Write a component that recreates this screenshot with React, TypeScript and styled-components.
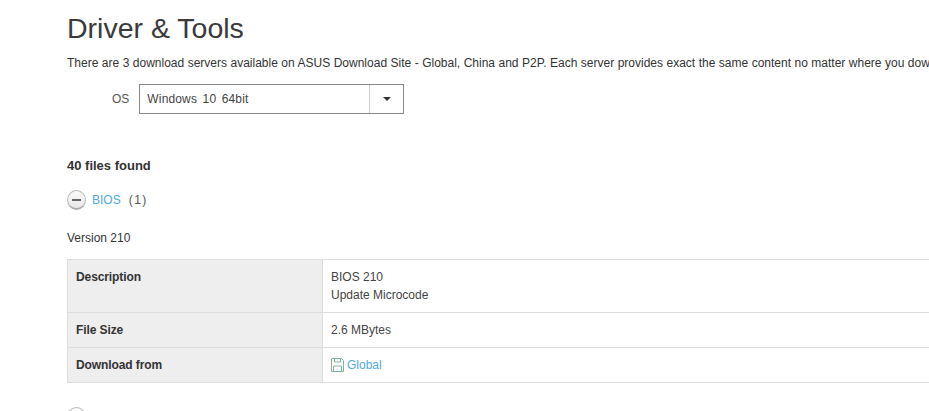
import styled, { createGlobalStyle } from "styled-components";

const GlobalStyle = createGlobalStyle`
  html,
  body {
    width: 929px;
    height: 411px;
    margin: 0;
    overflow: hidden;
    background: #fff;
  }
`;

const Page = styled.div`
  box-sizing: border-box;
  width: 1200px;
  height: 411px;
  padding: 10px 0 0 67px;
  overflow: hidden;
  font-family: "Liberation Sans", Arial, sans-serif;
  font-size: 12px;
  color: #333;
`;

const Title = styled.h1`
  margin: 0;
  font-size: 28.5px;
  font-weight: 400;
  line-height: 36px;
  color: #3a3a3a;
`;

const Intro = styled.p`
  margin: 9px 0 0;
  line-height: 16px;
  white-space: nowrap;
  word-spacing: 0.15px;
`;

const OsRow = styled.div`
  display: flex;
  gap: 10px;
  align-items: center;
  margin: 13px 0 0 45px;
`;

const OsLabel = styled.span`
  color: #555;
`;

const Select = styled.div`
  box-sizing: border-box;
  display: flex;
  width: 265px;
  height: 30px;
  border: 1px solid #888;
`;

const SelectValue = styled.div`
  display: flex;
  flex: 1;
  align-items: center;
  padding-left: 7px;
  color: #444;
  letter-spacing: 0.15px;
  word-spacing: 2px;
`;

const SelectArrow = styled.div`
  display: flex;
  align-items: center;
  justify-content: center;
  width: 33px;
  border-left: 1px solid #ccc;

  &::after {
    content: "";
    border-top: 4px solid #333;
    border-right: 4px solid transparent;
    border-left: 4px solid transparent;
  }
`;

const FilesFound = styled.h2`
  margin: 44px 0 0;
  font-size: 13px;
  font-weight: 700;
  line-height: 16px;
  color: #333;
`;

const Category = styled.div`
  display: flex;
  gap: 6px;
  align-items: center;
  height: 20px;
  margin-top: 16px;
`;

const ToggleButton = styled.span`
  box-sizing: border-box;
  display: flex;
  align-items: center;
  justify-content: center;
  width: 19px;
  height: 20px;
  background: linear-gradient(#fafafa, #e8e8e8);
  border: 1px solid #bbb;
  border-bottom: 2px solid #aaa;
  border-radius: 50%;

  &::after {
    content: "";
    width: 9px;
    height: 2px;
    background: #666;
  }
`;

const LinkText = styled.a`
  color: #4fa9dd;
  text-decoration: none;
`;

const Count = styled.span`
  margin-left: 2px;
  color: #555;
  letter-spacing: 1.5px;
`;

const Version = styled.div`
  margin-top: 20px;
  line-height: 16px;
`;

const SpecTable = styled.div`
  display: grid;
  grid-template-columns: 255px 1fr;
  margin-top: 13px;
  border-top: 1px solid #ddd;
  border-bottom: 1px solid #ddd;
  border-left: 1px solid #ddd;
`;

const HeadCell = styled.div<{ $last?: boolean }>`
  box-sizing: border-box;
  padding: 8px;
  font-weight: 700;
  line-height: 18px;
  color: #333;
  letter-spacing: -0.1px;
  background: #eee;
  border-right: 1px solid #ddd;
  border-bottom: ${(p) => (p.$last ? "0" : "1px solid #ddd")};
`;

const ValueCell = styled.div<{ $last?: boolean }>`
  box-sizing: border-box;
  display: flex;
  flex-direction: column;
  padding: 8px;
  line-height: 18px;
  color: #444;
  border-bottom: ${(p) => (p.$last ? "0" : "1px solid #ddd")};
`;

const DownloadLink = styled(LinkText)`
  display: flex;
  gap: 3px;
  align-items: center;
`;

const NextToggle = styled.span`
  display: block;
  box-sizing: border-box;
  width: 19px;
  height: 20px;
  margin-top: 24px;
  border: 1px solid #bbb;
  border-radius: 50%;
`;

const FloppyIcon = () => (
  <svg width="13" height="14" viewBox="0 0 13 14" fill="none" stroke="#7fb59a" strokeWidth="1">
    <path d="M.5.5h10l2 2v11H.5z" />
    <path d="M3.5.5v3.5h6V.5M2.5 13.5V8h8v5.5" />
  </svg>
);

export default function App() {
  return (
    <Page>
      <GlobalStyle />
      <Title>Driver &amp; Tools</Title>
      <Intro>
        There are 3 download servers available on ASUS Download Site - Global, China and P2P. Each
        server provides exact the same content no matter where you download.
      </Intro>
      <OsRow>
        <OsLabel>OS</OsLabel>
        <Select>
          <SelectValue>Windows 10 64bit</SelectValue>
          <SelectArrow />
        </Select>
      </OsRow>
      <FilesFound>40 files found</FilesFound>
      <Category>
        <ToggleButton />
        <LinkText href="#">BIOS</LinkText>
        <Count>(1)</Count>
      </Category>
      <Version>Version 210</Version>
      <SpecTable>
        <HeadCell>Description</HeadCell>
        <ValueCell>
          <span>BIOS 210</span>
          <span>Update Microcode</span>
        </ValueCell>
        <HeadCell>File Size</HeadCell>
        <ValueCell>2.6 MBytes</ValueCell>
        <HeadCell $last>Download from</HeadCell>
        <ValueCell $last>
          <DownloadLink href="#">
            <FloppyIcon />
            Global
          </DownloadLink>
        </ValueCell>
      </SpecTable>
      <NextToggle />
    </Page>
  );
}
